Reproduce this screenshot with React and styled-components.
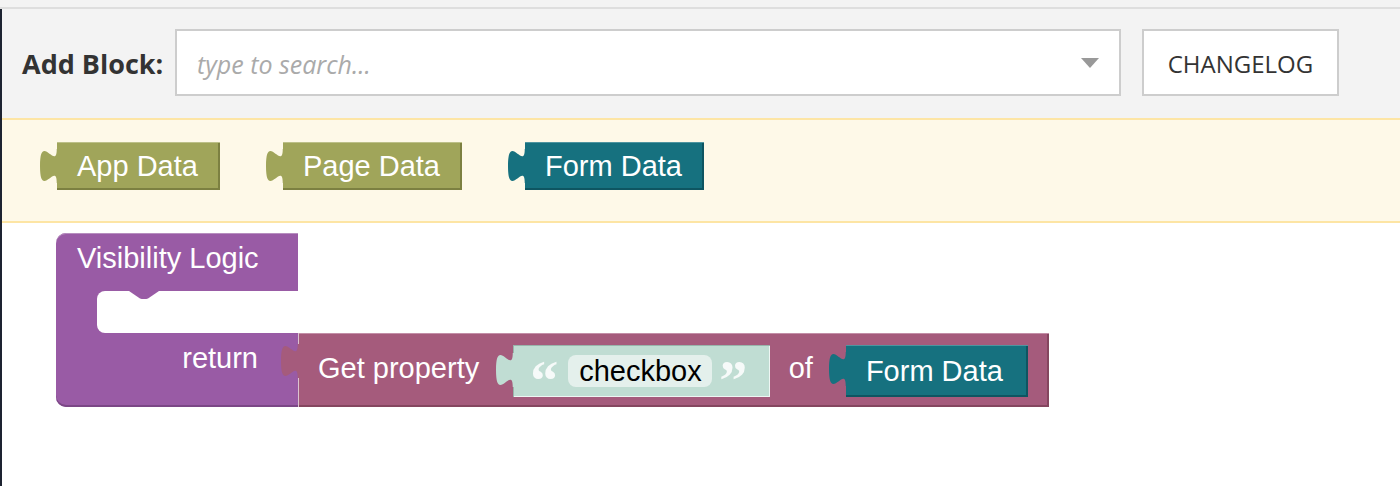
import React from 'react';
import styled, { createGlobalStyle } from 'styled-components';

const GlobalStyle = createGlobalStyle`
  html, body { margin: 0; padding: 0; background: #fff; }
  body { font-family: "Open Sans", "Liberation Sans", sans-serif; }
`;

const COLORS = {
  olive: { fill: '#a0a55a', light: '#bcc088', dark: '#7c8041' },
  teal: { fill: '#16717f', light: '#4e95a0', dark: '#0e5561' },
  purple: { fill: '#995ba5', light: '#b78ebf', dark: '#7b4786' },
  mauve: { fill: '#a55b7c', light: '#c38fa7', dark: '#85465f' },
  mint: { fill: '#c0ddd3', light: '#dcece6', dark: '#98b5ab' },
};

const Page = styled.div`
  width: 1400px;
  height: 486px;
  overflow: hidden;
  display: flex;
  flex-direction: column;
  background: #fff;
`;

const TopBand = styled.div`
  flex: none;
  height: 7px;
  background: #f3f3f3;
  border-bottom: 2px solid #dedede;
`;

const Main = styled.div`
  flex: 1;
  min-height: 0;
  display: flex;
  flex-direction: column;
  border-left: 2px solid #1d2331;
`;

const Toolbar = styled.div`
  flex: none;
  height: 109px;
  box-sizing: border-box;
  padding: 20px 0 0 20px;
  background: #f3f3f3;
  display: flex;
  align-items: flex-start;
`;

const ToolLabel = styled.label`
  width: 153px;
  height: 67px;
  display: flex;
  align-items: center;
  padding-top: 2px;
  box-sizing: border-box;
  font: 700 27px "Open Sans", sans-serif;
  color: #333;
  white-space: nowrap;
`;

const SearchBox = styled.div`
  position: relative;
  width: 946px;
  height: 67px;
  box-sizing: border-box;
  border: 2px solid #cdcdcd;
  background: #fff;
  display: flex;
  align-items: center;
  margin-right: 21px;
`;

const SearchInput = styled.input`
  flex: 1;
  height: 100%;
  border: none;
  outline: none;
  background: transparent;
  padding: 2px 0 0 20px;
  box-sizing: border-box;
  font: 400 25px "Open Sans", sans-serif;
  color: #333;
  &::placeholder {
    color: #aaa;
    font-style: italic;
  }
`;

const Caret = styled.svg`
  flex: none;
  width: 18px;
  height: 10px;
  margin: 0 20px 0 10px;
`;

const Button = styled.button`
  width: 197px;
  height: 67px;
  box-sizing: border-box;
  border: 2px solid #cdcdcd;
  background: #fff;
  font: 400 24px "Open Sans", sans-serif;
  color: #333;
  padding: 2px 0 0 0;
  cursor: pointer;
`;

const Flyout = styled.div`
  flex: none;
  height: 105px;
  box-sizing: border-box;
  background: #fef9e8;
  border-top: 2px solid #fde5a4;
  border-bottom: 2px solid #fde5a4;
  padding: 22px 0 0 55px;
  display: flex;
  align-items: flex-start;
  gap: 63px;
`;

const Workspace = styled.div`
  flex: 1;
  background: #fff;
  padding: 10px 0 0 54px;
`;

const BlockFont = `
  font-family: "Liberation Sans", Arial, Helvetica, sans-serif;
  font-size: 29px;
  line-height: 29px;
  color: #fff;
  white-space: nowrap;
`;

const ValueBlock = styled.div`
  position: relative;
  flex: none;
  height: ${(p) => p.$h || 48}px;
  box-sizing: border-box;
  padding: 0 ${(p) => p.$pr || 22}px 0 20px;
  display: flex;
  align-items: center;
  background: ${(p) => p.$c.fill};
  box-shadow: inset 0 1px 0 ${(p) => p.$c.light}, inset -2px -2px 0 ${(p) => p.$c.dark};
  ${BlockFont}
`;

const TabSvg = styled.svg`
  position: absolute;
  left: -17px;
  top: ${(p) => p.$top || 7}px;
  width: 18px;
  height: 34px;
  overflow: visible;
`;

const Tab = ({ color, top }) => (
  <TabSvg $top={top} viewBox="-8 5 8.6 15" preserveAspectRatio="none">
    <path d="M0.6,5 H0 c0,10 -8,-8 -8,7.5 s8,-2.5 8,7.5 H0.6 Z" fill={color} />
  </TabSvg>
);

const Block = ({ c, children, h, pr }) => (
  <ValueBlock $c={c} $h={h} $pr={pr}>
    <Tab color={c.fill} />
    {children}
  </ValueBlock>
);

const StatementRow = styled.div`
  display: flex;
  align-items: flex-end;
`;

const CBlock = styled.div`
  flex: none;
  width: 242px;
  display: flex;
  flex-direction: column;
  background: ${COLORS.purple.fill};
  border-radius: 10px 0 0 10px;
  box-shadow: inset 0 1px 0 ${COLORS.purple.light}, inset 0 -2px 0 ${COLORS.purple.dark};
`;

const CHeader = styled.div`
  height: 58px;
  box-sizing: border-box;
  padding: 11px 0 0 21px;
  ${BlockFont}
`;

const CMouth = styled.div`
  position: relative;
  height: 42px;
  margin-left: 41px;
  background: #fff;
  border-radius: 8px 0 0 8px;
`;

const Notch = styled.svg`
  position: absolute;
  left: 32px;
  top: 0;
  width: 30px;
  height: 8px;
`;

const CFooter = styled.div`
  height: 74px;
  box-sizing: border-box;
  padding: 11px 40px 0 0;
  display: flex;
  justify-content: flex-end;
  ${BlockFont}
`;

const ExprBlock = styled.div`
  position: relative;
  flex: none;
  height: 74px;
  box-sizing: border-box;
  padding: 12px 21px 10px 20px;
  display: flex;
  align-items: center;
  background: ${COLORS.mauve.fill};
  box-shadow: inset 1px 0 0 #dcc3cf, inset 0 1px 0 ${COLORS.mauve.light}, inset -2px -2px 0 ${COLORS.mauve.dark};
  ${BlockFont}
`;

const InlineLabel = styled.span`
  margin: 0 ${(p) => p.$after}px 6px 0;
`;

const TextBlock = styled.div`
  position: relative;
  flex: none;
  height: 52px;
  box-sizing: border-box;
  padding: 0 25px 0 21px;
  display: flex;
  align-items: center;
  background: ${COLORS.mint.fill};
  box-shadow: inset 1px 1px 0 ${COLORS.mint.dark}, inset -1px -1px 0 #eef6f3;
  margin-right: 19px;
`;

const Quote = styled.span`
  width: ${(p) => p.$w}px;
  height: 30px;
  margin-right: ${(p) => p.$mr}px;
  font: 700 56px/1 "Liberation Serif", "Times New Roman", serif;
  color: rgba(255, 255, 255, 0.85);
  overflow: visible;
  display: flex;
  align-items: flex-start;
  justify-content: center;
  margin-top: -6px;
`;

const Field = styled.span`
  height: 32px;
  box-sizing: border-box;
  padding: 0 10px 0 11px;
  display: flex;
  align-items: center;
  border-radius: 8px;
  background: #e4f0ec;
  color: #000;
  font-family: "Liberation Sans", Arial, sans-serif;
  font-size: 29px;
  line-height: 29px;
  margin-right: 10px;
`;

export default function App() {
  return (
    <>
      <GlobalStyle />
      <Page>
        <TopBand />
        <Main>
          <Toolbar>
            <ToolLabel>Add Block:</ToolLabel>
            <SearchBox>
              <SearchInput placeholder="type to search..." />
              <Caret viewBox="0 0 18 10">
                <path d="M0,0 H18 L9,10 Z" fill="#999" />
              </Caret>
            </SearchBox>
            <Button>CHANGELOG</Button>
          </Toolbar>
          <Flyout>
            <Block c={COLORS.olive}>App Data</Block>
            <Block c={COLORS.olive}>Page Data</Block>
            <Block c={COLORS.teal}>Form Data</Block>
          </Flyout>
          <Workspace>
            <StatementRow>
              <CBlock>
                <CHeader>Visibility Logic</CHeader>
                <CMouth>
                  <Notch viewBox="0 0 30 8">
                    <path d="M0,0 L11,7.5 Q15,9 19,7.5 L30,0 Z" fill={COLORS.purple.fill} />
                  </Notch>
                </CMouth>
                <CFooter>return</CFooter>
              </CBlock>
              <ExprBlock>
                <Tab color={COLORS.mauve.fill} top={11} />
                <InlineLabel $after={34}>Get property</InlineLabel>
                <TextBlock>
                  <Tab color={COLORS.mint.fill} top={8} />
                  <Quote $w={20} $mr={14}>“</Quote>
                  <Field>checkbox</Field>
                  <Quote $w={23} $mr={0}>”</Quote>
                </TextBlock>
                <InlineLabel $after={33}>of</InlineLabel>
                <Block c={COLORS.teal} h={52} pr={25}>Form Data</Block>
              </ExprBlock>
            </StatementRow>
          </Workspace>
        </Main>
      </Page>
    </>
  );
}
